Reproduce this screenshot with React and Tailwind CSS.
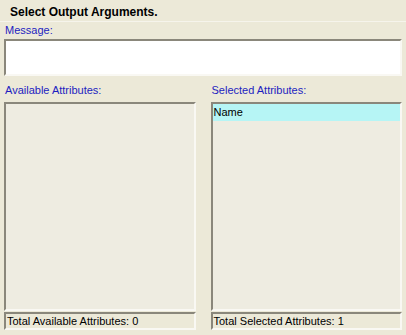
const sunken =
  "border-2 border-t-[#8a877b] border-l-[#8a877b] border-b-[#f9f8f3] border-r-[#f9f8f3]";

function ListPanel({ label, items, total }) {
  return (
    <div className="flex flex-1 flex-col">
      <div className="h-[26px] pl-[1px] pt-[8px] text-[11px] leading-[13px] text-[#1d1dc0]">{label}</div>
      <div className={`${sunken} flex-1 bg-[#eeece1]`}>
        {items.map((it) => (
          <div key={it} className="h-[17px] bg-[#b6f5f5] pl-[1px] text-[11px] leading-[17px] text-black">
            {it}
          </div>
        ))}
      </div>
      <div className={`${sunken} mt-[1px] h-[18px] pl-[1px] text-[11px] leading-[14px] text-black`}>
        {total}
      </div>
    </div>
  );
}

export default function App() {
  return (
    <div
      className="h-[335px] w-[406px] overflow-hidden bg-[#ece9d8]"
      style={{ fontFamily: '"Liberation Sans", Arial, sans-serif' }}
    >
      {/* Title */}
      <div className="h-[22px] border-b border-[#f6f4ec] pl-[10px] pt-[5px] text-[12px] font-bold leading-[14px] text-black">
        Select Output Arguments.
      </div>

      {/* Message */}
      <div className="px-[4px]">
        <div className="h-[17px] pt-[2px] pl-[1px] text-[11px] leading-[13px] text-[#1d1dc0]">Message:</div>
        <div className={`${sunken} h-[37px] bg-white`} />
      </div>

      {/* Attribute lists */}
      <div className="flex h-[259px] gap-[15px] px-[4px] pb-[5px]">
        <ListPanel label="Available Attributes:" items={[]} total="Total Available Attributes: 0" />
        <ListPanel label="Selected Attributes:" items={["Name"]} total="Total Selected Attributes: 1" />
      </div>
    </div>
  );
}
